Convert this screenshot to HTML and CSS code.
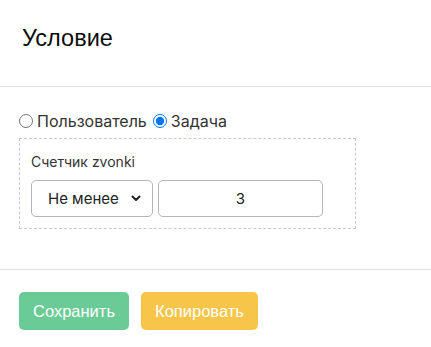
FILE: index.html
```html
<!DOCTYPE html>
<html lang="ru">
<head>
<meta charset="utf-8">
<link rel="stylesheet" href="styles.css">
</head>
<body>
<div class="modal">
  <div class="modal-header">
    <h2 class="title">Условие</h2>
  </div>
  <div class="modal-body">
    <div class="radios">
      <label class="radio"><input type="radio" name="t"> Пользователь</label>
      <label class="radio"><input type="radio" name="t" checked> Задача</label>
    </div>
    <div class="box">
      <div class="label">Счетчик zvonki</div>
      <div class="controls">
        <div class="select">
          <span class="select-text">Не менее</span>
          <svg class="chev" width="10" height="7" viewBox="0 0 10 7"><path d="M1.5 1.5 L5 5 L8.5 1.5" fill="none" stroke="#222" stroke-width="2" stroke-linecap="round" stroke-linejoin="round"/></svg>
        </div>
        <div class="input">3</div>
      </div>
    </div>
  </div>
  <div class="modal-footer">
    <button class="btn btn-save">Сохранить</button>
    <button class="btn btn-copy">Копировать</button>
  </div>
</div>
</body>
</html>
```
FILE: styles.css
```css
html, body {
  margin: 0;
  padding: 0;
  background: #fff;
}
body {
  font-family: Inter, "Noto Sans", sans-serif;
  color: #212529;
}
.modal {
  width: 431px;
}
.modal-header {
  height: 86px;
  border-bottom: 1px solid #e3e3e3;
  padding: 0 22px;
  box-sizing: content-box;
}
.title {
  margin: 0;
  padding-top: 25px;
  font-family: "Liberation Sans", Arial, sans-serif;
  font-weight: 400;
  font-size: 23.5px;
  line-height: 27px;
  color: #0d0d0d;
}
.modal-body {
  padding: 25px 19px 40px;
  height: 117px;
  border-bottom: 1px solid #e3e3e3;
}
.radios {
  display: flex;
  align-items: center;
  gap: 6px;
  height: 18px;
  font-size: 16px;
  color: #333;
}
.radio {
  display: flex;
  align-items: center;
  gap: 4px;
}
.radio input {
  margin: 0;
  width: 14px;
  height: 14px;
}
.box {
  margin-top: 8px;
  width: 337px;
  height: 91px;
  box-sizing: border-box;
  border: 1px dashed #c8c8c8;
  padding: 14px 11px 0;
}
.label {
  font-size: 14px;
  line-height: 18px;
  color: #333;
}
.controls {
  display: flex;
  gap: 5px;
  margin-top: 9px;
}
.select, .input {
  height: 37px;
  box-sizing: border-box;
  border: 1px solid #b6b4bd;
  border-radius: 5px;
  display: flex;
  align-items: center;
  font-size: 15px;
  color: #222;
}
.select {
  width: 122px;
  padding: 0 11px 0 16px;
  justify-content: space-between;
}
.input {
  width: 165px;
  justify-content: center;
}
.modal-footer {
  display: flex;
  gap: 12px;
  padding: 22px 19px;
}
.btn {
  height: 38px;
  border: none;
  border-radius: 5px;
  font-family: "Liberation Sans", Arial, sans-serif;
  font-size: 16.5px;
  color: #fff;
  padding: 0;
}
.btn-save {
  width: 110px;
  background: #6bcb96;
}
.btn-copy {
  width: 117px;
  background: #f6c54a;
}
```
